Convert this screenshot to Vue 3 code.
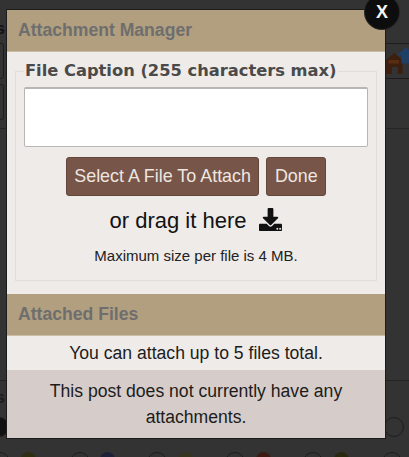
<template>
  <div class="page">
    <!-- dimmed page behind the dialog -->
    <div class="backdrop" aria-hidden="true">
      <span class="bg-letter bg-letter--top">s</span>
      <span class="bg-box bg-box--one"></span>
      <span class="bg-box bg-box--two"></span>
      <span class="bg-bar"></span>
      <span class="bg-rule bg-rule--one"></span>
      <span class="bg-rule bg-rule--two"></span>
      <span class="bg-letter bg-letter--low">s</span>
      <svg class="bg-house" viewBox="0 0 24 24">
        <path d="M1 12 8 6l7 6v12h-4v-6H6v6H1z" fill="#3d1f10" />
        <path d="M3 12h9v3H3z" fill="#5a2c12" />
        <path d="M10 8l8-7 7 7h-3v7h-8V8z" fill="#1f3f66" />
      </svg>
      <span class="radio radio--edge"></span>
      <span class="radio radio--right"></span>
      <span
        v-for="x in radios"
        :key="'r' + x"
        class="radio radio--row"
        :style="{ left: x + 'px' }"
      ></span>
      <span
        v-for="s in smileys"
        :key="'s' + s.x"
        class="smiley"
        :style="{ left: s.x + 'px', background: s.color }"
      ></span>
    </div>

    <div class="dialog">
      <button class="close" type="button">X</button>
      <h2 class="band">Attachment Manager</h2>
      <div class="upload">
        <fieldset class="caption">
          <legend>File Caption (255 characters max)</legend>
          <textarea class="caption__input"></textarea>
          <div class="actions">
            <button class="btn" type="button">Select A File To Attach</button>
            <button class="btn" type="button">Done</button>
          </div>
          <p class="drag">
            or drag it here
            <svg class="drag__icon" viewBox="0 0 512 512">
              <path
                d="M216 0h80c13 0 24 11 24 24v168h88c18 0 27 21 14 34L270 378a20 20 0 0 1-28 0L90 226c-13-13-4-34 14-34h88V24c0-13 11-24 24-24z"
              />
              <path
                fill-rule="evenodd"
                d="M512 376v112c0 13-11 24-24 24H24c-13 0-24-11-24-24V376c0-13 11-24 24-24h147l49 49c20 20 52 20 72 0l49-49h147c13 0 24 11 24 24zM388 464a20 20 0 1 0 0-.1zm64 0a20 20 0 1 0 0-.1z"
              />
            </svg>
          </p>
          <p class="limit">Maximum size per file is 4 MB.</p>
        </fieldset>
      </div>
      <h2 class="band">Attached Files</h2>
      <p class="quota">You can attach up to 5 files total.</p>
      <p class="empty">This post does not currently have any attachments.</p>
    </div>
  </div>
</template>

<script setup>
const radios = [-10, 70, 147, 225, 303, 382]
const smileys = [
  { x: 21, color: '#2e2e12' },
  { x: 100, color: '#1f2138' },
  { x: 178, color: '#35351f' },
  { x: 256, color: '#3d1a12' },
  { x: 334, color: '#29290f' },
]
</script>

<style scoped>
.page {
  position: relative;
  width: 409px;
  height: 457px;
  overflow: hidden;
  background: #333;
  font-family: "Liberation Sans", Arial, sans-serif;
}

.backdrop {
  position: absolute;
  inset: 0;
}

.bg-letter {
  position: absolute;
  left: -4px;
  color: #111;
  font-size: 16px;
  font-weight: 700;
  line-height: 16px;
}

.bg-letter--top {
  top: 21px;
}

.bg-letter--low {
  top: 390px;
  color: #1c1c1c;
}

.bg-box {
  position: absolute;
  left: -10px;
  width: 12px;
  height: 34px;
  border: 1px solid #1d1d1d;
  border-radius: 3px;
}

.bg-box--one {
  top: 43px;
}

.bg-box--two {
  top: 84px;
}

.bg-bar {
  position: absolute;
  top: 43px;
  left: 385px;
  width: 24px;
  height: 34px;
  border-top: 1px solid #1d1d1d;
  border-bottom: 1px solid #1d1d1d;
}

.bg-rule {
  position: absolute;
  left: 0;
  right: 0;
  height: 1px;
  background: #252525;
}

.bg-rule--one {
  top: 128px;
}

.bg-rule--two {
  top: 380px;
}

.bg-house {
  position: absolute;
  top: 46px;
  left: 385px;
  width: 28px;
  height: 28px;
}

.radio {
  position: absolute;
  width: 18px;
  height: 18px;
  border: 1px solid #1d1d1d;
  border-radius: 50%;
}

.radio--edge {
  top: 417px;
  left: -11px;
  background: #111;
}

.radio--right {
  top: 417px;
  left: 384px;
}

.radio--row {
  top: 452px;
}

.smiley {
  position: absolute;
  top: 452px;
  width: 15px;
  height: 15px;
  border-radius: 50%;
}

.dialog {
  position: absolute;
  top: 10px;
  left: 7px;
  width: 378px;
  background: #eeebe8;
  box-shadow: 0 0 0 1px #1c1c1c;
}

.close {
  position: absolute;
  top: -15px;
  right: -14px;
  width: 34px;
  height: 34px;
  padding: 0;
  border: 0;
  border-radius: 50%;
  background: #0d0d0d;
  box-shadow: 0 0 0 1px #262626;
  color: #f4f4f4;
  font-family: "Liberation Sans", Arial, sans-serif;
  font-size: 18px;
  font-weight: 700;
  line-height: 34px;
}

.band {
  margin: 0;
  padding: 10px 11px;
  height: 42px;
  box-sizing: border-box;
  background: #b29f7f;
  border-bottom: 1px solid #c9bda6;
  color: #6e6e6e;
  font-size: 17.6px;
  font-weight: 700;
  line-height: 21px;
}

.upload {
  padding: 10px 8px 13px;
}

.caption {
  margin: 0;
  padding: 7px 8px 0;
  height: 219px;
  box-sizing: border-box;
  border: 1px solid #e0dedb;
  min-width: 0;
}

.caption legend {
  padding: 0 1px;
  margin-left: 0;
  color: #4a4a4a;
  font-family: "DejaVu Sans", sans-serif;
  font-size: 16.3px;
  font-weight: 700;
  line-height: 18px;
}

.caption__input {
  display: block;
  width: 100%;
  height: 60px;
  box-sizing: border-box;
  margin: 0;
  border: 1px solid #b8b6b3;
  border-top-width: 2px;
  border-radius: 2px;
  background: #fff;
  resize: none;
}

.actions {
  display: flex;
  justify-content: center;
  gap: 7px;
  margin-top: 10px;
}

.btn {
  height: 39px;
  padding: 0 7.5px;
  border: 1px solid #64463a;
  border-radius: 3px;
  background: #775548;
  color: #eee6e0;
  font-family: inherit;
  font-size: 17.9px;
  line-height: 37px;
}

.drag {
  display: flex;
  align-items: center;
  justify-content: center;
  gap: 13px;
  margin: 11px 0 0;
  color: #111;
  font-size: 22px;
  line-height: 28px;
}

.drag__icon {
  width: 23px;
  height: 23px;
  fill: #111;
  margin-top: -4px;
}

.limit {
  margin: 12px 0 0;
  color: #222;
  font-size: 15px;
  line-height: 18px;
  text-align: center;
}

.quota {
  margin: 0;
  height: 34px;
  background: #eeebe8;
  color: #1c1c1c;
  font-size: 17.6px;
  line-height: 34px;
  text-align: center;
}

.empty {
  margin: 0;
  height: 68px;
  padding: 8px 24px 0;
  box-sizing: border-box;
  background: #d6ccc9;
  color: #1c1c1c;
  font-size: 17.6px;
  line-height: 26px;
  text-align: center;
}
</style>
